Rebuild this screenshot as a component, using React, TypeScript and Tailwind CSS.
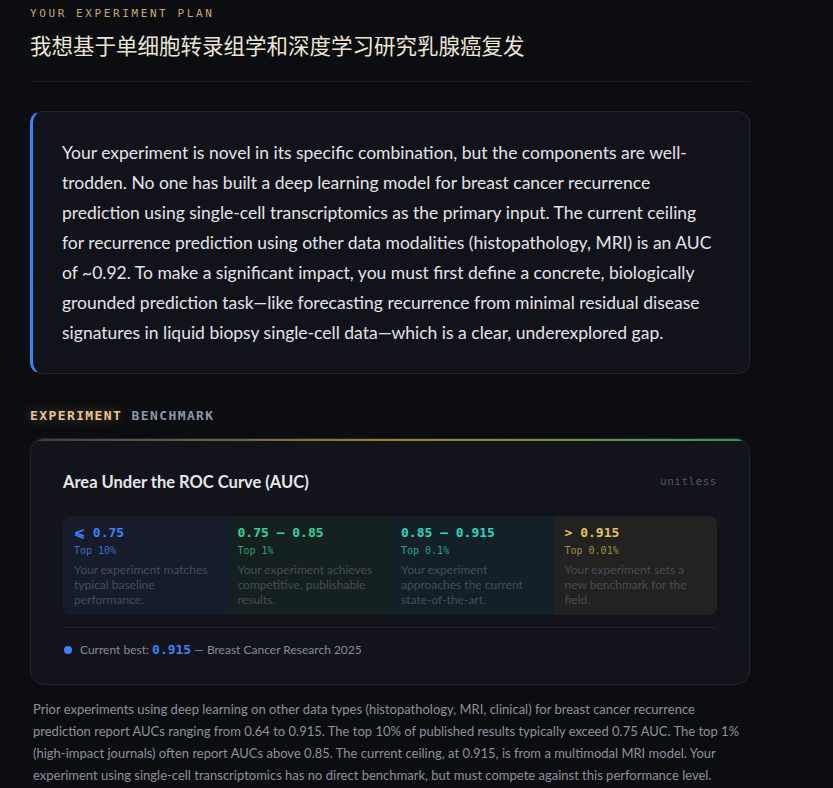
import React from "react";

const sans = "font-['Lato','Noto_Sans','Noto_Sans_CJK_SC',sans-serif]";
const mono = "font-['DejaVu_Sans_Mono','Liberation_Mono',monospace]";

const tiers = [
  {
    range: "⩽ 0.75",
    top: "Top 10%",
    text: "Your experiment matches typical baseline performance.",
    bg: "bg-[#161c2c]",
    rangeColor: "text-[#3b82f6]",
    topColor: "text-[#3a6cc4]",
  },
  {
    range: "0.75 – 0.85",
    top: "Top 1%",
    text: "Your experiment achieves competitive, publishable results.",
    bg: "bg-[#152120]",
    rangeColor: "text-[#34d399]",
    topColor: "text-[#27a173]",
  },
  {
    range: "0.85 – 0.915",
    top: "Top 0.1%",
    text: "Your experiment approaches the current state-of-the-art.",
    bg: "bg-[#142027]",
    rangeColor: "text-[#2dd4bf]",
    topColor: "text-[#22a596]",
  },
  {
    range: "> 0.915",
    top: "Top 0.01%",
    text: "Your experiment sets a new benchmark for the field.",
    bg: "bg-[#222220]",
    rangeColor: "text-[#e3c458]",
    topColor: "text-[#a18b3f]",
  },
];

export default function App() {
  return (
    <div className={`min-h-screen bg-[#0c0d11] ${sans} overflow-hidden`}>
      <div className="w-[720px] ml-[30px] pt-[7px]">
        {/* Header */}
        <div className={`${mono} text-[11px] tracking-[2.6px] text-[#c9a66b] leading-[14px]`}>
          YOUR EXPERIMENT PLAN
        </div>
        <h1 className="mt-[9px] text-[21.5px] leading-[30px] text-[#ece5d6] font-['Noto_Sans_CJK_SC',sans-serif]">
          我想基于单细胞转录组学和深度学习研究乳腺癌复发
        </h1>
        <div className="mt-[21px] h-px bg-[#1c1e25]" />

        {/* Summary callout */}
        <div className="mt-[29px] rounded-[12px] border border-[#22242c] border-l-[3px] border-l-[#3b82f6] bg-[#12131a] pl-[29px] pr-[30px] pt-[26px] pb-[25px]">
          <p className="text-[17.5px] leading-[30px] text-[#e2e3e8]">
            Your experiment is novel in its specific combination, but the components are well-trodden. No one has built a deep learning model for breast cancer recurrence prediction using single-cell transcriptomics as the primary input. The current ceiling for recurrence prediction using other data modalities (histopathology, MRI) is an AUC of ~0.92. To make a significant impact, you must first define a concrete, biologically grounded prediction task—like forecasting recurrence from minimal residual disease signatures in liquid biopsy single-cell data—which is a clear, underexplored gap.
          </p>
        </div>

        {/* Benchmark heading */}
        <div className={`mt-[34px] ${mono} text-[13px] font-bold tracking-[1.4px] leading-[16px]`}>
          <span className="text-[#e9c58c] [text-shadow:0_0_12px_rgba(233,190,120,0.4)]">EXPERIMENT</span>{" "}
          <span className="text-[#8c96a9]">BENCHMARK</span>
        </div>

        {/* Benchmark card */}
        <div className="mt-[14px] rounded-[14px] border border-[#22242c] bg-[#12131b] overflow-hidden">
          <div className="h-[2px] bg-gradient-to-r from-[#3c3d44] via-[#9a8420] to-[#23985a]" />
          <div className="px-[32px] pt-[31px] pb-[25px]">
            <div className="flex items-center justify-between">
              <div className="text-[16.5px] font-bold leading-[20px] text-[#e6e7ec]">
                Area Under the ROC Curve (AUC)
              </div>
              <div className={`${mono} text-[11px] text-[#51545f] tracking-[0.5px]`}>unitless</div>
            </div>

            <div className="mt-[24px] grid grid-cols-4 rounded-[8px] overflow-hidden">
              {tiers.map((t) => (
                <div key={t.top} className={`${t.bg} px-[11px] pt-[9px] pb-[8px]`}>
                  <div className={`${mono} text-[13px] font-bold leading-[16px] ${t.rangeColor}`}>{t.range}</div>
                  <div className={`${mono} mt-[3px] text-[10px] leading-[14px] ${t.topColor}`}>{t.top}</div>
                  <div className="mt-[4px] text-[12px] leading-[15px] text-[#474b5b]">{t.text}</div>
                </div>
              ))}
            </div>

            <div className="mt-[12px] h-px bg-[#1f2129]" />

            <div className="mt-[13px] flex items-center gap-[8px] text-[12px] text-[#868b98] leading-[18px]">
              <span className="w-[8px] h-[8px] rounded-full bg-[#3b82f6] ml-[1px]" />
              <span>
                Current best:{" "}
                <span className={`${mono} font-bold text-[13px] text-[#3b82f6]`}>0.915</span>{" "}
                — Breast Cancer Research 2025
              </span>
            </div>
          </div>
        </div>

        {/* Context paragraph */}
        <p className="mt-[13px] pl-[3px] text-[13px] leading-[22px] text-[#8d919b]">
          Prior experiments using deep learning on other data types (histopathology, MRI, clinical) for breast cancer recurrence prediction report AUCs ranging from 0.64 to 0.915. The top 10% of published results typically exceed 0.75 AUC. The top 1% (high-impact journals) often report AUCs above 0.85. The current ceiling, at 0.915, is from a multimodal MRI model. Your experiment using single-cell transcriptomics has no direct benchmark, but must compete against this performance level.
        </p>
      </div>
    </div>
  );
}
